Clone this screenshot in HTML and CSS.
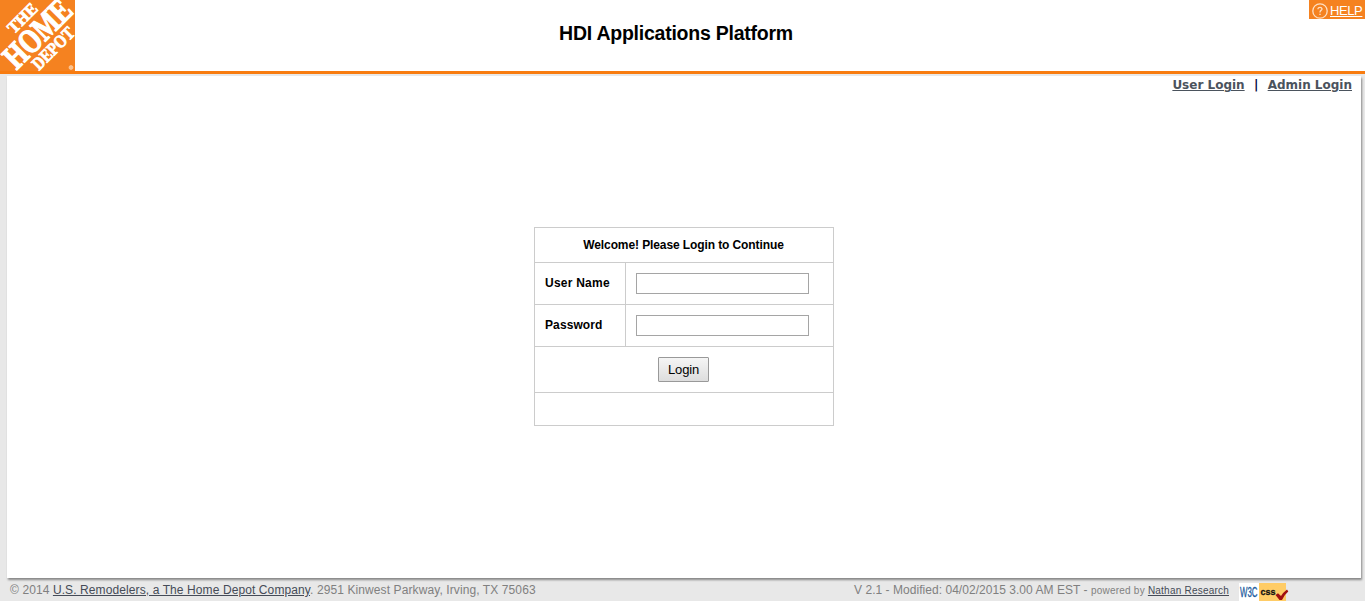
FILE: index.html
```html
<!DOCTYPE html>
<html lang="en">
<head>
<meta charset="utf-8">
<title>HDI Applications Platform</title>
<link rel="stylesheet" href="styles.css">
</head>
<body>
<header class="header">
  <svg class="logo" width="75" height="71" viewBox="0 0 75 71">
    <rect width="75" height="71" fill="#f58220"/>
    <g class="logo-text">
      <text class="logo-small" transform="translate(14 34.500) rotate(-45)" font-size="17" textLength="35" lengthAdjust="spacingAndGlyphs">THE</text>
      <text class="logo-big" transform="translate(16.500 70.500) rotate(-45)" font-size="34" textLength="82" lengthAdjust="spacingAndGlyphs">HOME</text>
      <text class="logo-small" transform="translate(39 71) rotate(-45)" font-size="18" textLength="52" lengthAdjust="spacingAndGlyphs">DEPOT</text>
    </g>
    <circle cx="71" cy="67.500" r="2" fill="#fac08c" stroke="#fbd3ae" stroke-width=".6"/>
  </svg>
  <h1 class="title">HDI Applications Platform</h1>
  <div class="help">
    <svg width="16" height="16" viewBox="0 0 16 16" fill="none" stroke="#fde0c4">
      <circle cx="8" cy="8" r="7.200" stroke-width="1.300"/>
      <path d="M6 6.300V5.500Q6.200 4.300 8 4.300T10 5.900Q10 6.700 9 7.400T8 9.500" stroke-width="1.300"/>
      <path d="M8 10.700V12" stroke-width="1.400"/>
    </svg>
    <a href="#">HELP</a>
  </div>
</header>
<main class="main">
  <nav class="nav"><a href="#">User Login</a><span class="bar">|</span><a href="#">Admin Login</a></nav>
  <form class="login">
    <div class="row welcome">Welcome! Please Login to Continue</div>
    <div class="row field"><label class="label user" for="user">User Name</label><div class="cell"><input id="user" type="text"></div></div>
    <div class="row field"><label class="label" for="pass">Password</label><div class="cell"><input id="pass" type="password"></div></div>
    <div class="row action"><button type="button">Login</button></div>
    <div class="row message"></div>
  </form>
</main>
<footer class="footer">
  <div class="copy">© 2014 <a href="#">U.S. Remodelers, a The Home Depot Company</a>. 2951 Kinwest Parkway, Irving, TX 75063</div>
  <div class="version">V 2.1 - Modified: 04/02/2015 3.00 AM EST - <span class="powered">powered by <a href="#">Nathan Research</a></span></div>
  <svg class="badge" width="50" height="18" viewBox="0 0 50 18">
    <rect width="20" height="18" fill="#fff"/>
    <rect x="20" width="27" height="18" fill="#fc6"/>
    <text x="1" y="14" font-size="14" fill="#1c5c9e" stroke="#1c5c9e" stroke-width=".3" textLength="17.500" lengthAdjust="spacingAndGlyphs">W3C</text>
    <text x="21.500" y="12" font-size="9.500" font-weight="bold" fill="#111" stroke="#111" stroke-width=".3" textLength="15" lengthAdjust="spacingAndGlyphs">css</text>
    <path d="M36.500 12L39 10.300L42 13Q44 9.500 48 6.500L49.300 8.500Q45 12 43 17L40.500 17Z" fill="#a01010"/>
  </svg>
</footer>
</body>
</html>
```
FILE: styles.css
```css
* { box-sizing: border-box; }
body { margin: 0; height: 601px; overflow: hidden; background: #e8e8e8; display: flex; flex-direction: column; font-family: "Liberation Sans", Arial, sans-serif; }
.header { position: relative; height: 74px; flex: none; display: flex; justify-content: center; background: #fff; border-bottom: 3px solid #f87c10; }
.logo { position: absolute; left: 0; top: 0; display: block; overflow: visible; }
.logo-text { font-family: "Liberation Serif", serif; font-weight: bold; fill: #fff; stroke: #fff; }
.logo-big { stroke-width: 1.4px; }
.logo-small { stroke-width: .8px; }
.title { margin: 21px 0 0; padding-right: 13px; font-size: 19.5px; line-height: 24px; letter-spacing: -.24px; color: #000; }
.help { position: absolute; top: 0; right: 0; width: 56px; height: 19px; padding: 3px 0 0 3px; display: flex; gap: 2px; background: #f58220; font-size: 13px; line-height: 16px; letter-spacing: -.4px; }
.help a { color: #fff; }
.main { flex: none; height: 502px; margin: 2px 4px 0 7px; background: #fff; box-shadow: 1px 2px 2px #888; display: flex; flex-direction: column; align-items: center; }
.nav { align-self: flex-end; margin-right: 9px; height: 18px; display: flex; font: bold 12px/18px "DejaVu Sans", sans-serif; color: #000040; }
.nav a { color: #4b535d; }
.bar { width: 23px; text-align: center; }
.login { width: 300px; margin: 133px 1px 0 0; border: 1px solid #ccc; border-bottom: 0; font-size: 12px; color: #000; }
.row { border-bottom: 1px solid #ccc; }
.welcome { height: 35px; line-height: 34px; text-align: center; font-weight: bold; letter-spacing: -.1px; }
.field { display: flex; height: 42px; }
.label { width: 91px; padding-left: 10.5px; line-height: 40px; font-weight: bold; letter-spacing: .1px; border-right: 1px solid #ccc; }
.user { letter-spacing: .24px; }
.cell { padding: 10px; }
.cell input { display: block; width: 173px; height: 21px; border: 1px solid #a5a5a5; background: #fff; }
.action { height: 46px; display: flex; justify-content: center; padding: 10px 1px 0 0; }
.action button { width: 51px; height: 25px; padding: 0 0 0 1px; border: 1px solid #999; border-radius: 1px; background: linear-gradient(#f5f5f5, #ddd); color: #000; font: 13px "Liberation Sans", Arial, sans-serif; letter-spacing: -.15px; }
.message { height: 33px; }
.footer { flex: 1; display: flex; padding: 5px 0 0 10px; font-size: 12px; line-height: 14px; color: #808080; white-space: nowrap; }
.footer a { color: #454b57; }
.copy { width: 844px; letter-spacing: .1px; }
.version { width: 385px; letter-spacing: .04px; }
.powered { font-size: 10px; letter-spacing: .22px; }
.badge { font-family: "Liberation Sans", Arial, sans-serif; }
```
